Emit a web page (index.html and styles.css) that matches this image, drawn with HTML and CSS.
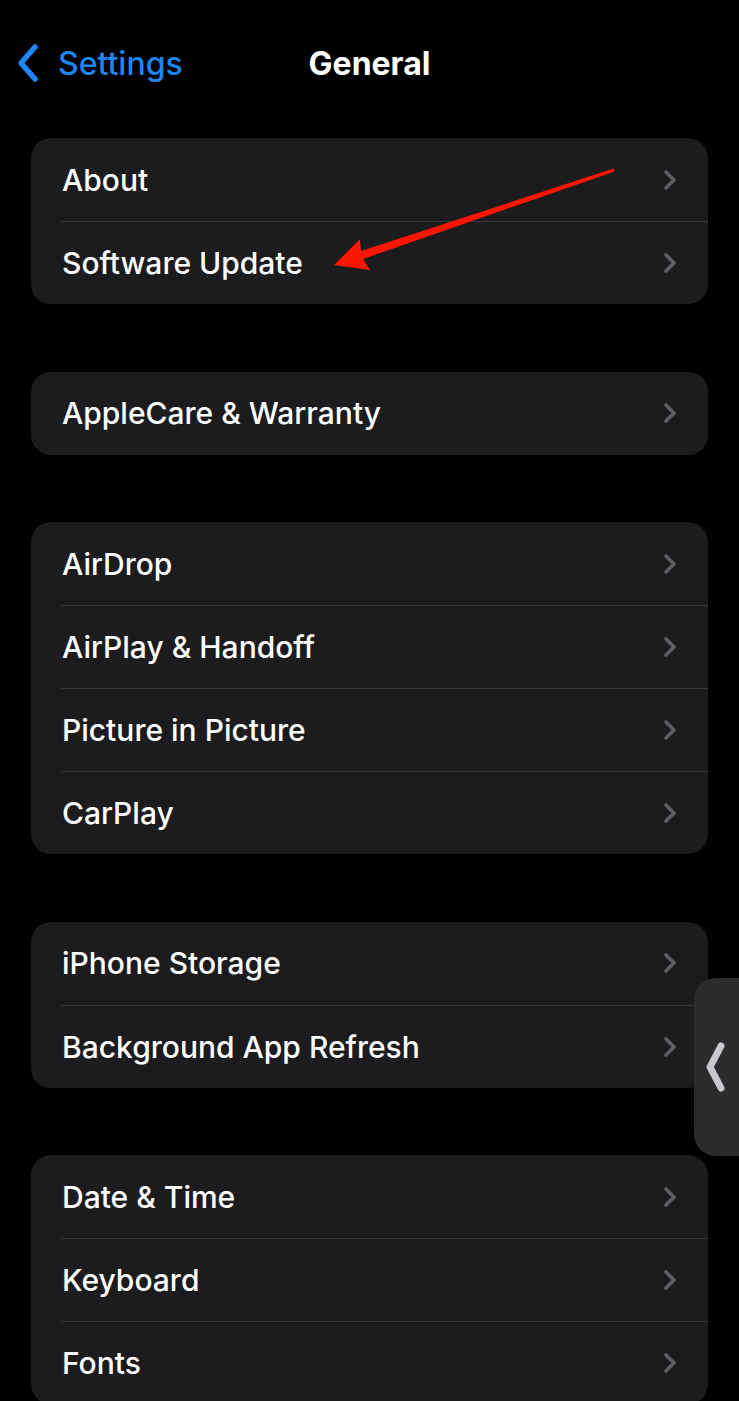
FILE: index.html
```html
<!DOCTYPE html>
<html lang="en">
<head>
  <meta charset="UTF-8" />
  <meta name="viewport" content="width=device-width, initial-scale=1.0" />
  <title>General</title>
  <link rel="stylesheet" href="styles.css">
</head>
<body>
  <div class="nav">
    <a class="back" href="#">
      <svg class="back-icon" viewBox="0 0 24 40" width="24" height="40">
        <path d="M19 4 L5 20 L19 36" fill="none" stroke="currentColor" stroke-width="5.5" stroke-linecap="round" stroke-linejoin="round"/>
      </svg>
      <span>Settings</span>
    </a>
    <h1 class="title">General</h1>
  </div>

  <div class="list">
    <div class="group">
      <div class="row"><span>About</span><svg class="chev" viewBox="0 0 14 22"><path d="M3 3 L11 11 L3 19"/></svg></div>
      <div class="row"><span>Software Update</span><svg class="chev" viewBox="0 0 14 22"><path d="M3 3 L11 11 L3 19"/></svg></div>
    </div>

    <div class="group">
      <div class="row"><span>AppleCare &amp; Warranty</span><svg class="chev" viewBox="0 0 14 22"><path d="M3 3 L11 11 L3 19"/></svg></div>
    </div>

    <div class="group">
      <div class="row"><span>AirDrop</span><svg class="chev" viewBox="0 0 14 22"><path d="M3 3 L11 11 L3 19"/></svg></div>
      <div class="row"><span>AirPlay &amp; Handoff</span><svg class="chev" viewBox="0 0 14 22"><path d="M3 3 L11 11 L3 19"/></svg></div>
      <div class="row"><span>Picture in Picture</span><svg class="chev" viewBox="0 0 14 22"><path d="M3 3 L11 11 L3 19"/></svg></div>
      <div class="row"><span>CarPlay</span><svg class="chev" viewBox="0 0 14 22"><path d="M3 3 L11 11 L3 19"/></svg></div>
    </div>

    <div class="group">
      <div class="row"><span>iPhone Storage</span><svg class="chev" viewBox="0 0 14 22"><path d="M3 3 L11 11 L3 19"/></svg></div>
      <div class="row"><span>Background App Refresh</span><svg class="chev" viewBox="0 0 14 22"><path d="M3 3 L11 11 L3 19"/></svg></div>
    </div>

    <div class="group">
      <div class="row"><span>Date &amp; Time</span><svg class="chev" viewBox="0 0 14 22"><path d="M3 3 L11 11 L3 19"/></svg></div>
      <div class="row"><span>Keyboard</span><svg class="chev" viewBox="0 0 14 22"><path d="M3 3 L11 11 L3 19"/></svg></div>
      <div class="row"><span>Fonts</span><svg class="chev" viewBox="0 0 14 22"><path d="M3 3 L11 11 L3 19"/></svg></div>
    </div>
  </div>

  <!-- annotation arrow drawn over the list -->
  <svg class="annotation" width="739" height="300" viewBox="0 0 739 300">
    <polygon points="334,265 360,239 361,251 613.5,168.6 614.5,171.4 363,259 370,270" fill="#ff1500"/>
  </svg>

  <!-- assistive side tab -->
  <div class="side-tab">
    <svg viewBox="0 0 24 56" width="24" height="56">
      <path d="M17 7 L6 28 L17 49" fill="none" stroke="#c9c9cd" stroke-width="7" stroke-linecap="round" stroke-linejoin="round"/>
    </svg>
  </div>
</body>
</html>
```

FILE: styles.css
```css
:root {
  --bg: #000;
  --cell: #1c1c1e;
  --sep: #38383a;
  --fg: #fff;
  --blue: #1d86f2;
  --chev: #5f5f63;
}

body {
  margin: 0;
  background: var(--bg);
  color: var(--fg);
  font-family: Inter, "Noto Sans", sans-serif;
  overflow: hidden;
}

.nav {
  position: relative;
  height: 126px;
  display: flex;
  align-items: center;
  justify-content: center;
}

.back {
  position: absolute;
  left: 16px;
  top: 43px;
  display: flex;
  align-items: center;
  gap: 18px;
  color: var(--blue);
  text-decoration: none;
  font-size: 32px;
  font-weight: 500;
}

.title {
  margin: 0;
  font-size: 32px;
  font-weight: 700;
}

.list {
  padding: 12px 31px 0;
  display: flex;
  flex-direction: column;
  gap: 67.5px;
}

.group {
  background: var(--cell);
  border-radius: 20px;
  overflow: hidden;
}

.row {
  margin-left: 30px;
  height: 83px;
  box-sizing: border-box;
  padding: 0 31px 0 1px;
  display: flex;
  align-items: center;
  justify-content: space-between;
  font-size: 30px;
  font-weight: 500;
}

.row + .row { border-top: 1px solid var(--sep); }

.chev {
  width: 14px;
  height: 22px;
  fill: none;
  stroke: var(--chev);
  stroke-width: 3.6;
  stroke-linecap: round;
  stroke-linejoin: round;
}

.annotation {
  position: absolute;
  left: 0;
  top: 0;
  pointer-events: none;
}

.side-tab {
  position: absolute;
  left: 694px;
  top: 978px;
  width: 60px;
  height: 178px;
  background: #2c2c2e;
  border-radius: 22px 0 0 22px;
  display: flex;
  align-items: center;
  padding-left: 10px;
  box-sizing: border-box;
}
```
